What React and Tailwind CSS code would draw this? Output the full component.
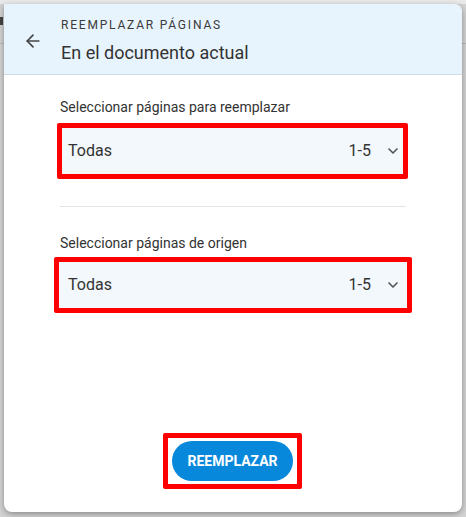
import { ArrowLeft, ChevronDown } from 'lucide-react';

const PageSelect = ({ label, value, range, boxClass, innerClass, labelClass }) => (
  <div className="flex flex-col">
    <p className={`text-[14px] leading-4 text-[#333] ${labelClass}`}>{label}</p>
    {/* red annotation box around the select */}
    <div className={`border-[5px] border-[#ff0000] rounded-[2px] bg-white ${boxClass}`}>
      <div className={`flex h-full items-center bg-[#f3f8fc] ${innerClass}`}>
        <span className="flex-1 text-[16px] text-[#333]">{value}</span>
        <span className="text-[16px] text-[#333]">{range}</span>
        <ChevronDown className="ml-[14px] h-[16px] w-[16px] text-[#555]" strokeWidth={2.5} />
      </div>
    </div>
  </div>
);

const App = () => {
  return (
    <div
      className="relative h-[517px] w-[466px] overflow-hidden bg-[#d3d3d3] pt-[4px] pl-[4px]"
      style={{ fontFamily: 'Roboto, "Liberation Sans", sans-serif' }}
    >
      {/* backdrop bits */}
      <div className="absolute left-0 top-0 h-[4px] w-full bg-[#e9e9e9]" />
      <div className="absolute left-0 top-[17px] h-[8px] w-[3px] bg-[#444]" />
      <div className="absolute left-0 top-[43px] h-[1px] w-full bg-[#b8b8b8]" />

      <div className="relative flex h-[508px] w-[458px] flex-col overflow-hidden rounded-r-[8px] rounded-bl-[8px] bg-white shadow-[0_2px_6px_rgba(0,0,0,0.35)]">
        {/* Header */}
        <div className="flex h-[71px] items-center border-b border-[#cfdbe4] bg-[#e8f4fd] pt-[3px]">
          <ArrowLeft className="ml-[19px] h-[20px] w-[20px] text-[#444]" strokeWidth={2} />
          <div className="ml-[18px] flex flex-col">
            <span className="text-[12px] leading-4 tracking-[0.15em] text-[#3a3a3a]">REEMPLAZAR PÁGINAS</span>
            <span className="mt-[9px] text-[18px] leading-[22px] text-[#333]">En el documento actual</span>
          </div>
        </div>

        {/* Body */}
        <div className="flex flex-1 flex-col px-[56px] pt-[24px] pb-[23px]">
          <PageSelect
            label="Seleccionar páginas para reemplazar"
            value="Todas"
            range="1-5"
            labelClass="mb-[8px]"
            boxClass="-ml-[3px] h-[56px] w-[351px]"
            innerClass="pl-[6px] pr-[2px]"
          />

          <div className="mt-[27px] h-[1px] w-[346px] bg-[#e4e4e4]" />

          <div className="mt-[28px]">
            <PageSelect
              label="Seleccionar páginas de origen"
              value="Todas"
              range="1-5"
              labelClass="mb-[6px]"
              boxClass="-ml-[6px] h-[56px] w-[358px]"
              innerClass="pl-[9px] pr-[6px]"
            />
          </div>

          <div className="flex-1" />

          <div className="flex justify-center">
            <div className="ml-[-1px] rounded-[2px] border-[5px] border-[#ff0000] bg-white px-[4px] py-[3px]">
              <button className="h-[40px] w-[121px] rounded-full bg-[#0788db] text-[14px] font-bold text-white">
                REEMPLAZAR
              </button>
            </div>
          </div>
        </div>
      </div>
    </div>
  );
};

export default App;
